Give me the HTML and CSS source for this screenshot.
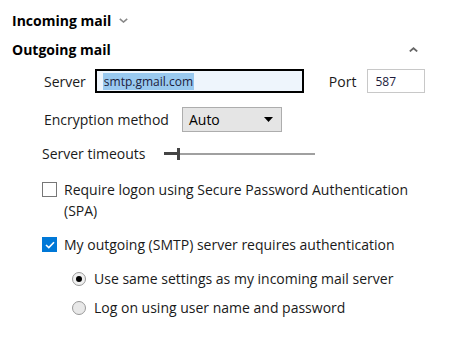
FILE: index.html
```html
<!DOCTYPE html>
<html lang="en">
<head>
    <meta charset="UTF-8">
    <meta name="viewport" content="width=device-width, initial-scale=1.0">
    <title>Mail settings</title>
    <link rel="stylesheet" href="styles.css">
</head>
<body>
    <div class="settings">
        <div class="section-head">
            <span>Incoming mail</span>
            <svg class="chevron" width="9" height="5" viewBox="0 0 9 5"><path d="M0.8 0.8 L4.5 4 L8.2 0.8" fill="none" stroke="#888" stroke-width="1.6"/></svg>
        </div>
        <div class="section-head open">
            <span>Outgoing mail</span>
            <svg class="chevron up" width="9" height="5" viewBox="0 0 9 5"><path d="M0.8 4.4 L4.5 1.2 L8.2 4.4" fill="none" stroke="#666" stroke-width="1.8"/></svg>
        </div>

        <div class="section-body">
            <div class="row server-row">
                <label class="label">Server</label>
                <div class="textbox focused"><span class="selected">smtp.gmail.com</span></div>
                <label class="label port-label">Port</label>
                <div class="textbox port">587</div>
            </div>

            <div class="row enc-row">
                <label class="label">Encryption method</label>
                <div class="combo">
                    <span>Auto</span>
                    <svg width="9" height="5" viewBox="0 0 9 5"><path d="M0 0 H9 L4.5 5 Z" fill="#000"/></svg>
                </div>
            </div>

            <div class="row timeout-row">
                <label class="label">Server timeouts</label>
                <div class="slider">
                    <div class="slider-fill"></div>
                    <div class="slider-thumb"></div>
                    <div class="slider-track"></div>
                </div>
            </div>

            <div class="check-row spa-row">
                <span class="checkbox"></span>
                <span class="check-text">Require logon using Secure Password Authentication (SPA)</span>
            </div>

            <div class="check-row auth-row">
                <span class="checkbox checked">
                    <svg width="10" height="8" viewBox="0 0 10 8"><path d="M1 4 L3.8 6.6 L9 1.2" fill="none" stroke="#fff" stroke-width="1.6"/></svg>
                </span>
                <span class="check-text">My outgoing (SMTP) server requires authentication</span>
            </div>

            <div class="radios">
                <div class="radio-row">
                    <span class="radio on"></span>
                    <span class="check-text">Use same settings as my incoming mail server</span>
                </div>
                <div class="radio-row">
                    <span class="radio"></span>
                    <span class="check-text">Log on using user name and password</span>
                </div>
            </div>
        </div>
    </div>
</body>
</html>
```

FILE: styles.css
```css
body {
    margin: 0;
    background: #fff;
    font-family: "Segoe UI", "Open Sans", sans-serif;
    font-size: 14px;
    color: #000;
}
.settings {
    width: 426px;
    padding: 6px 0 0 12px;
}
.section-head {
    display: flex;
    align-items: center;
    height: 29px;
    font-weight: bold;
}
.section-head .chevron {
    margin-left: 8px;
}
.section-head.open {
    justify-content: space-between;
    padding-right: 20px;
}
.section-body {
    padding-left: 32px;
}
.row {
    display: flex;
    align-items: center;
}
.label {
    color: #1a1a1a;
}
.server-row {
    margin-top: 5px;
}
.textbox {
    box-sizing: border-box;
    height: 24px;
    display: flex;
    align-items: center;
    font-size: 12px;
    color: #1c1c3c;
}
.textbox.focused {
    width: 209px;
    margin-left: 9px;
    border: 2px solid #000;
    background: #eef5fc;
    padding-left: 6px;
}
.selected {
    background: #99c9ef;
    line-height: 17px;
    padding: 0 1px;
}
.port-label {
    margin-left: 25px;
}
.textbox.port {
    width: 58px;
    margin-left: 11px;
    border: 1px solid #c8c8c8;
    padding-left: 7px;
}
.enc-row {
    margin-top: 14px;
}
.combo {
    box-sizing: border-box;
    width: 100px;
    height: 25px;
    margin-left: 13px;
    border: 1px solid #adadad;
    background: #e5e5e5;
    display: flex;
    align-items: center;
    justify-content: space-between;
    padding: 0 8px 0 6px;
}
.timeout-row {
    margin-top: 12px;
    margin-left: -2px;
}
.slider {
    width: 151px;
    height: 12px;
    margin-left: 18px;
    display: flex;
    align-items: center;
}
.slider-fill {
    width: 13px;
    height: 3px;
    background: #444;
}
.slider-thumb {
    width: 3px;
    height: 12px;
    background: #444;
}
.slider-track {
    flex: 1;
    height: 2px;
    background: #a0a0a0;
}
.check-row, .radio-row {
    display: flex;
    align-items: flex-start;
    line-height: 21px;
}
.check-text {
    color: #1a1a1a;
}
.spa-row {
    margin-top: 16px;
    margin-left: -2px;
    width: 380px;
}
.auth-row {
    margin-top: 13px;
    margin-left: -2px;
}
.checkbox {
    box-sizing: border-box;
    flex: none;
    width: 15px;
    height: 15px;
    margin: 3px 7px 0 0;
    border: 1px solid #777;
    background: #fff;
    display: flex;
    align-items: center;
    justify-content: center;
}
.checkbox.checked {
    background: #0078d7;
    border-color: #0078d7;
}
.radios {
    padding-left: 28px;
    margin-top: 13px;
}
.radio-row + .radio-row {
    margin-top: 8px;
}
.radio {
    box-sizing: border-box;
    flex: none;
    width: 14px;
    height: 14px;
    margin: 4px 8px 0 0;
    border: 1px solid #999;
    border-radius: 50%;
    background: #e8e8e8;
    display: flex;
    align-items: center;
    justify-content: center;
}
.radio.on {
    background: #f0f0f0;
}
.radio.on::after {
    content: "";
    width: 6px;
    height: 6px;
    border-radius: 50%;
    background: #000;
}
```
